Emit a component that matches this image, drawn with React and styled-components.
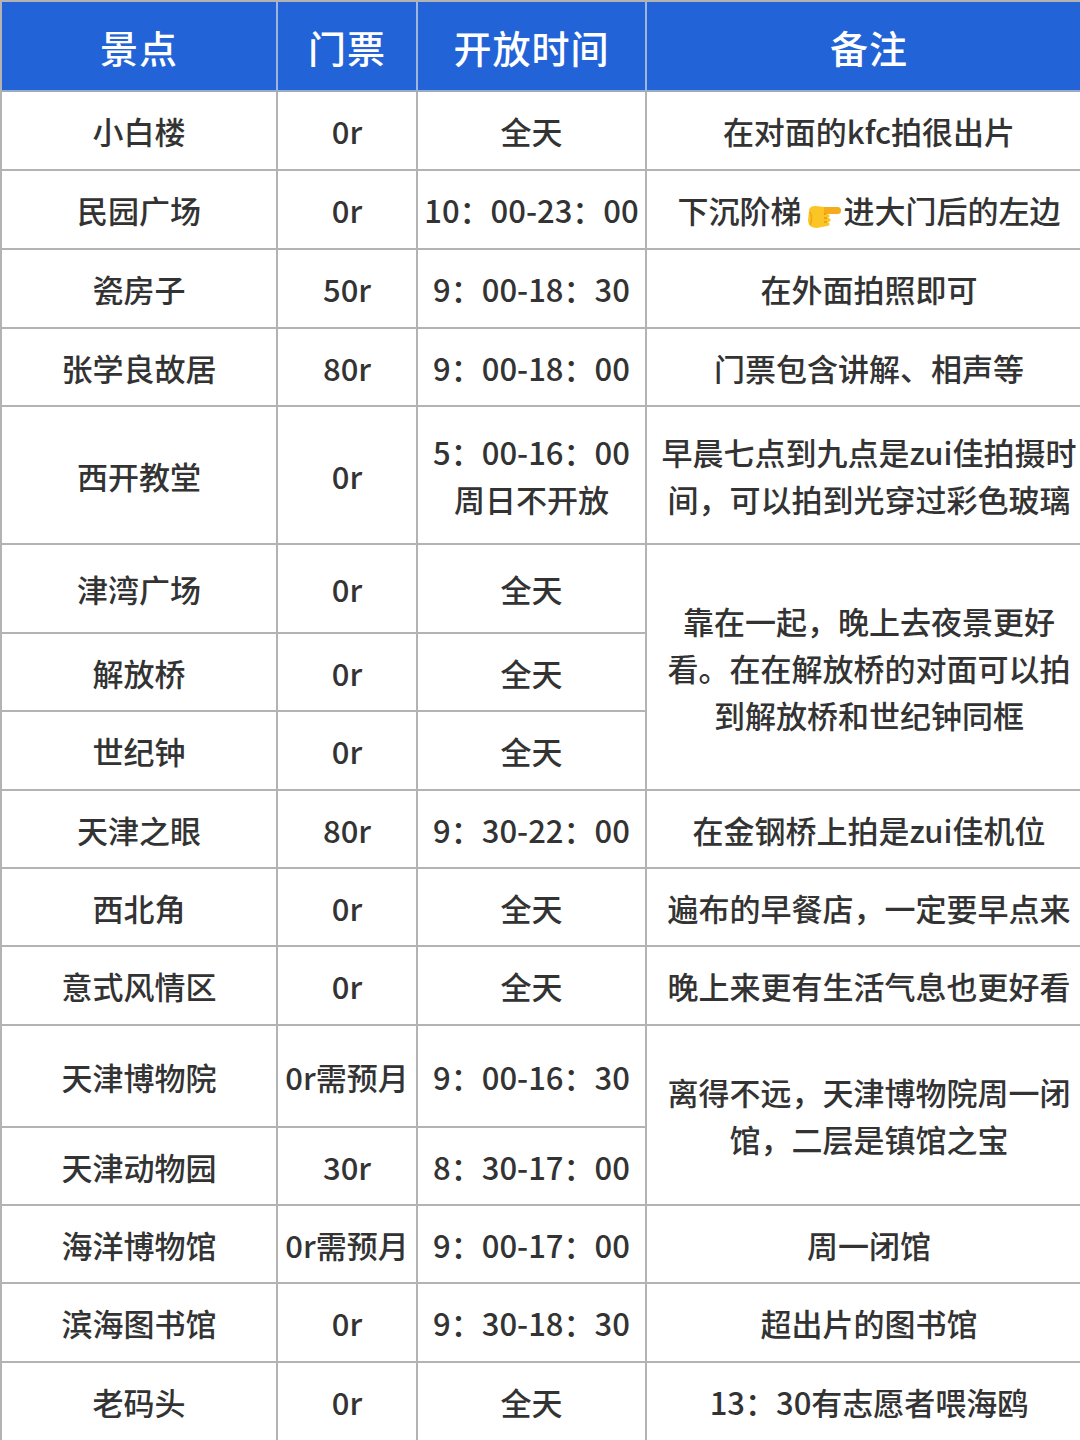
import React from "react";
import styled, { createGlobalStyle } from "styled-components";

const Global = createGlobalStyle`
  html, body { margin: 0; padding: 0; background: #ffffff; overflow: hidden; }
  body { font-family: "Noto Sans CJK SC", "Noto Sans", sans-serif; }
`;

const Table = styled.table`
  border-collapse: separate;
  border-spacing: 0;
  table-layout: fixed;
  width: 1093px;
  border-top: 2px solid #b3b3b3;
  border-left: 2px solid #b3b3b3;
  font-family: "Noto Sans CJK SC", "Noto Sans", sans-serif;
`;

const Col = styled.col`
  width: ${(p) => p.$w}px;
`;

const HeadRow = styled.tr`
  height: 90px;
`;

const Th = styled.th`
  box-sizing: border-box;
  background: #2263d7;
  color: #ffffff;
  font-size: 38px;
  font-weight: 500;
  text-align: center;
  vertical-align: middle;
  padding: 0;
  border-right: 2px solid #9fb6dc;
  border-bottom: 2px solid #9aa9c4;
  letter-spacing: 1px;
`;

const Row = styled.tr`
  height: ${(p) => p.$h}px;
`;

const Td = styled.td`
  box-sizing: border-box;
  color: #333333;
  font-size: 31px;
  font-weight: 500;
  line-height: 47px;
  text-align: center;
  vertical-align: middle;
  padding: 0 ${(p) => (p.$note ? 12 : 2)}px;
  border-right: 2px solid #b3b3b3;
  border-bottom: 2px solid #b3b3b3;
  white-space: ${(p) => (p.$note ? "normal" : "nowrap")};
  word-break: break-all;
`;

const Emoji = styled.svg`
  width: 36px;
  height: 34px;
  vertical-align: -8px;
  margin: 0 2px 0 4px;
`;

const PointRight = () => (
  <Emoji viewBox="0 0 36 34">
    <rect x="12" y="10" width="23" height="7" rx="3.5" fill="#f6ab1a" />
    <path
      d="M3 14 C3 10 6 9 10 9 L18 10 L18 17 L21 17 C24.5 17 24.5 21 21 21 L22 21 C25.5 21 25.5 25 22 25 L21 25 C24.5 25 24.5 29 21 29 L11 31 C5 31 2 28 2 23 Z"
      fill="#fcc526"
    />
    <path d="M18 17 L20 17 M18 21 L21 21 M18 25 L21 25" stroke="#e39612" strokeWidth="1.4" fill="none" />
    <path d="M4 15 C6 19 6 24 4 28" stroke="#f0a417" strokeWidth="1.5" fill="none" />
  </Emoji>
);

export default function App() {
  return (
    <>
      <Global />
      <Table>
        <colgroup>
          <Col $w={276} />
          <Col $w={140} />
          <Col $w={229} />
          <Col $w={446} />
        </colgroup>
        <thead>
          <HeadRow>
            <Th>景点</Th>
            <Th>门票</Th>
            <Th>开放时间</Th>
            <Th>备注</Th>
          </HeadRow>
        </thead>
        <tbody>
          <Row $h={79}>
            <Td>小白楼</Td>
            <Td>0r</Td>
            <Td>全天</Td>
            <Td $note>在对面的kfc拍很出片</Td>
          </Row>
          <Row $h={79}>
            <Td>民园广场</Td>
            <Td>0r</Td>
            <Td>10：00-23：00</Td>
            <Td $note>
              下沉阶梯<PointRight />进大门后的左边
            </Td>
          </Row>
          <Row $h={79}>
            <Td>瓷房子</Td>
            <Td>50r</Td>
            <Td>9：00-18：30</Td>
            <Td $note>在外面拍照即可</Td>
          </Row>
          <Row $h={78}>
            <Td>张学良故居</Td>
            <Td>80r</Td>
            <Td>9：00-18：00</Td>
            <Td $note>门票包含讲解、相声等</Td>
          </Row>
          <Row $h={138}>
            <Td>西开教堂</Td>
            <Td>0r</Td>
            <Td>
              5：00-16：00
              <br />
              周日不开放
            </Td>
            <Td $note>早晨七点到九点是zui佳拍摄时间，可以拍到光穿过彩色玻璃</Td>
          </Row>
          <Row $h={89}>
            <Td>津湾广场</Td>
            <Td>0r</Td>
            <Td>全天</Td>
            <Td $note rowSpan={3}>
              靠在一起，晚上去夜景更好看。在在解放桥的对面可以拍到解放桥和世纪钟同框
            </Td>
          </Row>
          <Row $h={78}>
            <Td>解放桥</Td>
            <Td>0r</Td>
            <Td>全天</Td>
          </Row>
          <Row $h={79}>
            <Td>世纪钟</Td>
            <Td>0r</Td>
            <Td>全天</Td>
          </Row>
          <Row $h={78}>
            <Td>天津之眼</Td>
            <Td>80r</Td>
            <Td>9：30-22：00</Td>
            <Td $note>在金钢桥上拍是zui佳机位</Td>
          </Row>
          <Row $h={78}>
            <Td>西北角</Td>
            <Td>0r</Td>
            <Td>全天</Td>
            <Td $note>遍布的早餐店，一定要早点来</Td>
          </Row>
          <Row $h={79}>
            <Td>意式风情区</Td>
            <Td>0r</Td>
            <Td>全天</Td>
            <Td $note>晚上来更有生活气息也更好看</Td>
          </Row>
          <Row $h={102}>
            <Td>天津博物院</Td>
            <Td>0r需预月</Td>
            <Td>9：00-16：30</Td>
            <Td $note rowSpan={2}>
              离得不远，天津博物院周一闭馆，二层是镇馆之宝
            </Td>
          </Row>
          <Row $h={78}>
            <Td>天津动物园</Td>
            <Td>30r</Td>
            <Td>8：30-17：00</Td>
          </Row>
          <Row $h={78}>
            <Td>海洋博物馆</Td>
            <Td>0r需预月</Td>
            <Td>9：00-17：00</Td>
            <Td $note>周一闭馆</Td>
          </Row>
          <Row $h={79}>
            <Td>滨海图书馆</Td>
            <Td>0r</Td>
            <Td>9：30-18：30</Td>
            <Td $note>超出片的图书馆</Td>
          </Row>
          <Row $h={79}>
            <Td>老码头</Td>
            <Td>0r</Td>
            <Td>全天</Td>
            <Td $note>13：30有志愿者喂海鸥</Td>
          </Row>
        </tbody>
      </Table>
    </>
  );
}
